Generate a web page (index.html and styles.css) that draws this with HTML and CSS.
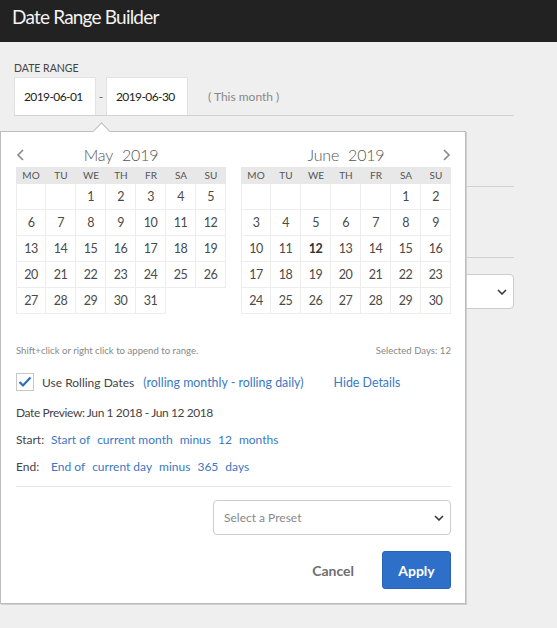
FILE: index.html
```html
<!DOCTYPE html>
<html>
<head>
<meta charset="utf-8">
<link rel="stylesheet" href="styles.css">
</head>
<body>
<header class="topbar"><h1>Date Range Builder</h1></header>
<main class="page">
  <div class="form">
    <div class="row-range">
      <label class="field-label">DATE RANGE</label>
      <div class="range-inputs">
        <div class="date-input">2019-06-01</div>
        <span class="dash">-</span>
        <div class="date-input">2019-06-30</div>
        <span class="range-note">( This month )</span>
      </div>
    </div>
    <div class="row-blank"></div>
    <div class="row-blank"></div>
    <div class="bg-select">
      <svg class="chev" width="10" height="6" viewBox="0 0 10 6"><polyline points="1,1 5,5 9,1" fill="none" stroke="#333" stroke-width="1.5"/></svg>
    </div>
  </div>

  <div class="popover">
    <div class="calendars">
      <div class="month">
        <div class="month-head">
          <svg class="nav nav-prev" width="8" height="12" viewBox="0 0 8 12"><polyline points="7,1 2,6 7,11" fill="none" stroke="#888" stroke-width="1.6"/></svg>
          <span>May</span><span class="year">2019</span>
        </div>
        <div class="grid">
          <div class="dow">MO</div><div class="dow">TU</div><div class="dow">WE</div><div class="dow">TH</div><div class="dow">FR</div><div class="dow">SA</div><div class="dow">SU</div>
          <div class="day"></div><div class="day"></div><div class="day">1</div><div class="day">2</div><div class="day">3</div><div class="day">4</div><div class="day">5</div>
          <div class="day">6</div><div class="day">7</div><div class="day">8</div><div class="day">9</div><div class="day">10</div><div class="day">11</div><div class="day">12</div>
          <div class="day">13</div><div class="day">14</div><div class="day">15</div><div class="day">16</div><div class="day">17</div><div class="day">18</div><div class="day">19</div>
          <div class="day">20</div><div class="day">21</div><div class="day">22</div><div class="day">23</div><div class="day">24</div><div class="day">25</div><div class="day">26</div>
          <div class="day">27</div><div class="day">28</div><div class="day">29</div><div class="day">30</div><div class="day">31</div>
        </div>
      </div>
      <div class="month">
        <div class="month-head">
          <span>June</span><span class="year">2019</span>
          <svg class="nav nav-next" width="8" height="12" viewBox="0 0 8 12"><polyline points="1,1 6,6 1,11" fill="none" stroke="#888" stroke-width="1.6"/></svg>
        </div>
        <div class="grid">
          <div class="dow">MO</div><div class="dow">TU</div><div class="dow">WE</div><div class="dow">TH</div><div class="dow">FR</div><div class="dow">SA</div><div class="dow">SU</div>
          <div class="day"></div><div class="day"></div><div class="day"></div><div class="day"></div><div class="day"></div><div class="day">1</div><div class="day">2</div>
          <div class="day">3</div><div class="day">4</div><div class="day">5</div><div class="day">6</div><div class="day">7</div><div class="day">8</div><div class="day">9</div>
          <div class="day">10</div><div class="day">11</div><div class="day today">12</div><div class="day">13</div><div class="day">14</div><div class="day">15</div><div class="day">16</div>
          <div class="day">17</div><div class="day">18</div><div class="day">19</div><div class="day">20</div><div class="day">21</div><div class="day">22</div><div class="day">23</div>
          <div class="day">24</div><div class="day">25</div><div class="day">26</div><div class="day">27</div><div class="day">28</div><div class="day">29</div><div class="day">30</div>
        </div>
      </div>
    </div>

    <div class="hint-row">
      <span>Shift+click or right click to append to range.</span>
      <span>Selected Days: 12</span>
    </div>

    <div class="rolling-row">
      <span class="checkbox">
        <svg width="14" height="12" viewBox="0 0 14 12"><polyline points="1.5,6 5,9.5 12.5,1.5" fill="none" stroke="#2d6ebd" stroke-width="2.2"/></svg>
      </span>
      <span class="rolling-label">Use Rolling Dates</span>
      <span class="link">(rolling monthly - rolling daily)</span>
      <span class="link hide-details">Hide Details</span>
    </div>

    <div class="preview">Date Preview: Jun 1 2018 - Jun 12 2018</div>

    <div class="rule-row">
      <span class="rule-label">Start:</span>
      <span class="link">Start of</span>
      <span class="link">current month</span>
      <span class="link">minus</span>
      <span class="link">12</span>
      <span class="link">months</span>
    </div>
    <div class="rule-row">
      <span class="rule-label">End:</span>
      <span class="link">End of</span>
      <span class="link">current day</span>
      <span class="link">minus</span>
      <span class="link">365</span>
      <span class="link">days</span>
    </div>

    <div class="divider"></div>

    <div class="preset-wrap">
      <div class="preset">
        <span>Select a Preset</span>
        <svg width="10" height="6" viewBox="0 0 10 6"><polyline points="1,1 5,5 9,1" fill="none" stroke="#333" stroke-width="1.5"/></svg>
      </div>
    </div>

    <div class="actions">
      <button class="cancel">Cancel</button>
      <button class="apply">Apply</button>
    </div>
  </div>
</main>
</body>
</html>
```

FILE: styles.css
```css
* { box-sizing: border-box; }

body {
  margin: 0;
  width: 557px;
  height: 628px;
  overflow: hidden;
  background: #efefef;
  font-family: Lato, "Open Sans", sans-serif;
  color: #444;
}

.topbar {
  height: 42px;
  background: #222222;
  padding-left: 12px;
}

.topbar h1 {
  margin: 0;
  font-size: 19px;
  font-weight: 400;
  letter-spacing: -0.8px;
  line-height: 34px;
  color: #f2f2f2;
}

.page {
  position: relative;
  padding: 20px 0 0 14px;
}

.form { width: 500px; }

.row-range { border-bottom: 1px solid #d2d2d2; }

.field-label {
  display: block;
  font-size: 10.5px;
  line-height: 13px;
  color: #444;
  margin-bottom: 2px;
}

.range-inputs {
  display: flex;
  align-items: center;
}

.date-input {
  width: 82px;
  height: 38px;
  background: #fff;
  border: 1px solid #e2e2e2;
  border-bottom: 0;
  padding-left: 9px;
  font-size: 12px;
  letter-spacing: -0.6px;
  line-height: 37px;
  color: #222;
}

.dash {
  width: 10px;
  text-align: center;
  font-size: 12px;
  color: #666;
}

.range-note {
  margin-left: 20px;
  font-size: 12px;
  color: #888;
}

.row-blank {
  height: 71px;
  border-bottom: 1px solid #d2d2d2;
}

.bg-select {
  margin-top: 16px;
  height: 35px;
  background: #fff;
  border: 1px solid #cccccc;
  border-radius: 4px;
  display: flex;
  justify-content: flex-end;
  align-items: center;
  padding-right: 6px;
}

.popover {
  position: absolute;
  left: 0;
  top: 89px;
  width: 466px;
  background: #fff;
  border: 1px solid #bdbdbd;
  box-shadow: 1px 1px 0 #cfcfcf;
  padding: 12px 14px 14px 15px;
}

.popover::before {
  content: "";
  position: absolute;
  left: 94px;
  top: -7px;
  width: 12px;
  height: 12px;
  background: #fff;
  border-left: 1px solid #bdbdbd;
  border-top: 1px solid #bdbdbd;
  transform: rotate(45deg);
}

.calendars {
  display: flex;
  gap: 15px;
}

.month { width: 210px; }

.month-head {
  position: relative;
  height: 22px;
  text-align: center;
  font-size: 16px;
  font-weight: 300;
  letter-spacing: -0.2px;
  line-height: 21px;
  color: #555;
}

.month-head .year { margin-left: 9px; }

.nav {
  position: absolute;
  top: 5px;
}
.nav-prev { left: 0; }
.nav-next { right: 0; }

.grid {
  margin-top: 1px;
  display: grid;
  grid-template-columns: repeat(7, 30px);
}

.dow {
  height: 17px;
  background: #e8e8e8;
  font-size: 10px;
  line-height: 17px;
  text-align: center;
  color: #555;
}

.day {
  height: 26px;
  line-height: 25px;
  text-align: center;
  font-size: 12.5px;
  letter-spacing: -0.5px;
  color: #4a4a4a;
  border-right: 1px solid #ededed;
  border-bottom: 1px solid #ededed;
}

.grid .day:nth-child(7n+1) { border-left: 1px solid #ededed; }

.day.today { font-weight: 700; color: #333; }

.hint-row {
  margin-top: 30px;
  display: flex;
  justify-content: space-between;
  font-size: 9.6px;
  line-height: 14px;
  color: #888;
}

.rolling-row {
  margin-top: 15px;
  height: 18px;
  display: flex;
  align-items: center;
  font-size: 12px;
}

.checkbox {
  width: 18px;
  height: 18px;
  border: 1px solid #c8c8c8;
  background: #fff;
  margin-right: 8px;
  display: flex;
  align-items: center;
  justify-content: center;
}

.rolling-label {
  color: #444;
  margin-right: 9px;
}

.link { color: #3b78c3; }

.rolling-row .link { font-size: 12.4px; }

.hide-details { margin-left: 30px; }

.preview {
  margin-top: 13px;
  font-size: 12px;
  letter-spacing: -0.4px;
  line-height: 18px;
  color: #444;
}

.rule-row {
  margin-top: 9px;
  display: flex;
  gap: 7px;
  font-size: 12px;
  line-height: 18px;
}

.rule-label {
  width: 28px;
  color: #444;
}

.divider {
  margin-top: 10px;
  border-top: 1px solid #e6e6e6;
}

.preset-wrap {
  margin-top: 13px;
  display: flex;
  justify-content: flex-end;
}

.preset {
  width: 238px;
  height: 35px;
  border: 1px solid #cccccc;
  border-radius: 4px;
  display: flex;
  align-items: center;
  justify-content: space-between;
  padding: 0 6px 0 10px;
  font-size: 12px;
  color: #888;
}

.actions {
  margin-top: 16px;
  display: flex;
  justify-content: flex-end;
  align-items: center;
}

.cancel {
  border: 0;
  background: none;
  padding: 0;
  font-family: inherit;
  font-size: 14px;
  font-weight: 700;
  color: #6e6e6e;
  margin-right: 28px;
}

.apply {
  width: 69px;
  height: 38px;
  background: #2e6fc9;
  border: 1px solid #2a63b4;
  border-radius: 3px;
  color: #fff;
  font-family: inherit;
  font-size: 14px;
  font-weight: 700;
  padding: 0;
}
```
